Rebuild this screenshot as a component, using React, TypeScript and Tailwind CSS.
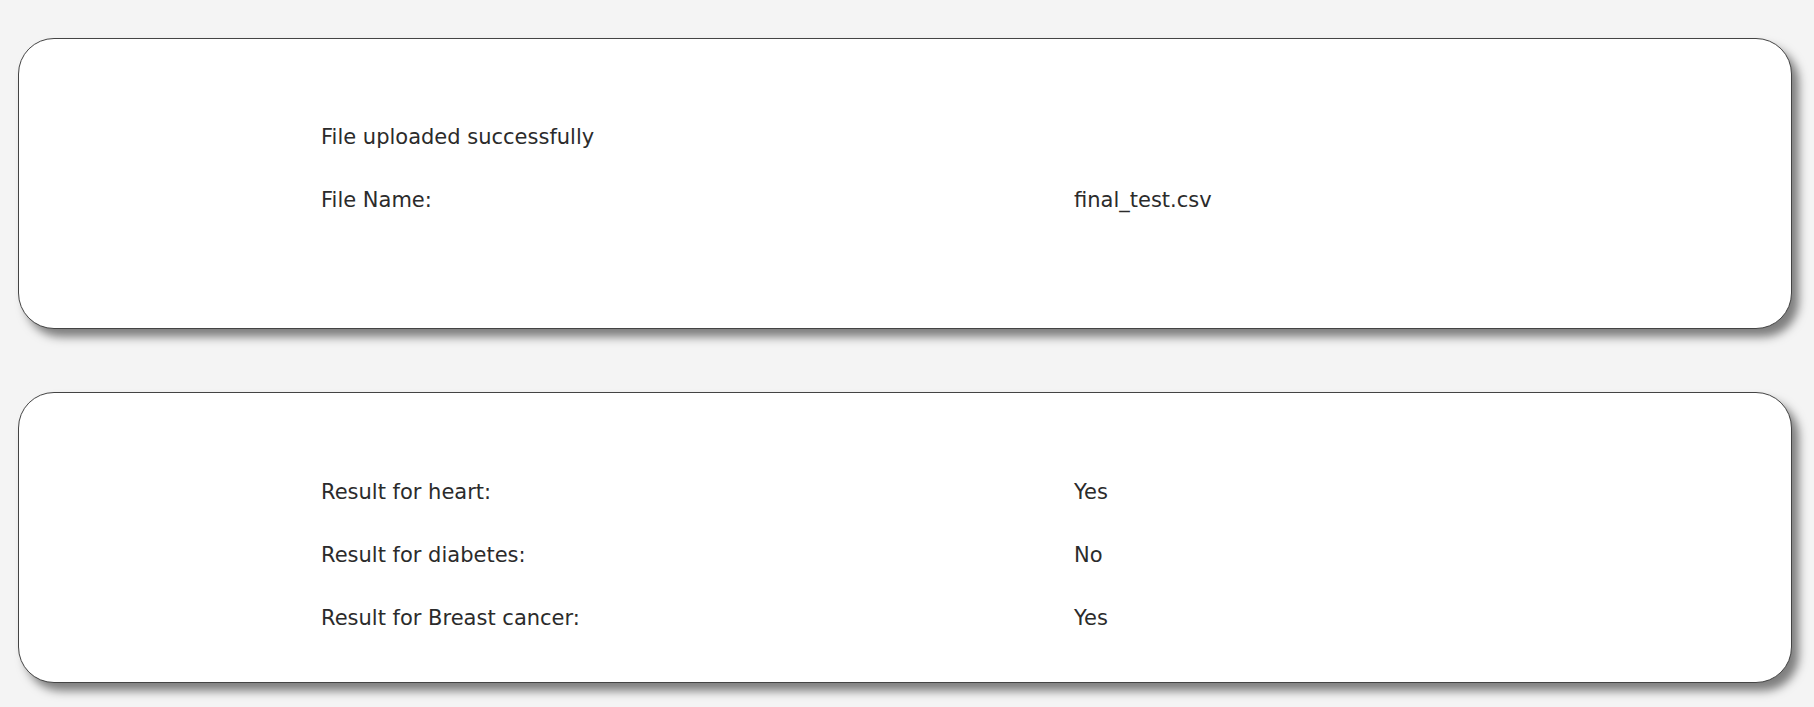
import React from 'react';

const rows = [
  { label: 'Result for heart:', value: 'Yes' },
  { label: 'Result for diabetes:', value: 'No' },
  { label: 'Result for Breast cancer:', value: 'Yes' },
];

function Row({ label, value }: { label: string; value: string }) {
  return (
    <div className="flex h-[63px] items-center">
      <div className="w-[753px]">{label}</div>
      <div>{value}</div>
    </div>
  );
}

export default function App() {
  return (
    <div
      className="h-[707px] overflow-hidden bg-[#f4f4f4] pt-[38px] text-[21px] text-[#2b2b2b]"
      style={{ fontFamily: '"Comic Sans MS", "DejaVu Sans", sans-serif' }}
    >
      <div className="ml-[18px] mr-[22px] h-[291px] rounded-[36px] border border-[#444] bg-white pl-[302px] pt-[67px] shadow-[7px_8px_10px_#7e7e7e]">
        <div className="flex h-[63px] items-center">File uploaded successfully</div>
        <Row label="File Name:" value="final_test.csv" />
      </div>

      <div className="ml-[18px] mr-[22px] mt-[63px] h-[291px] rounded-[36px] border border-[#444] bg-white pl-[302px] pt-[68px] shadow-[7px_8px_10px_#7e7e7e]">
        {rows.map((r) => (
          <Row key={r.label} label={r.label} value={r.value} />
        ))}
      </div>
    </div>
  );
}
